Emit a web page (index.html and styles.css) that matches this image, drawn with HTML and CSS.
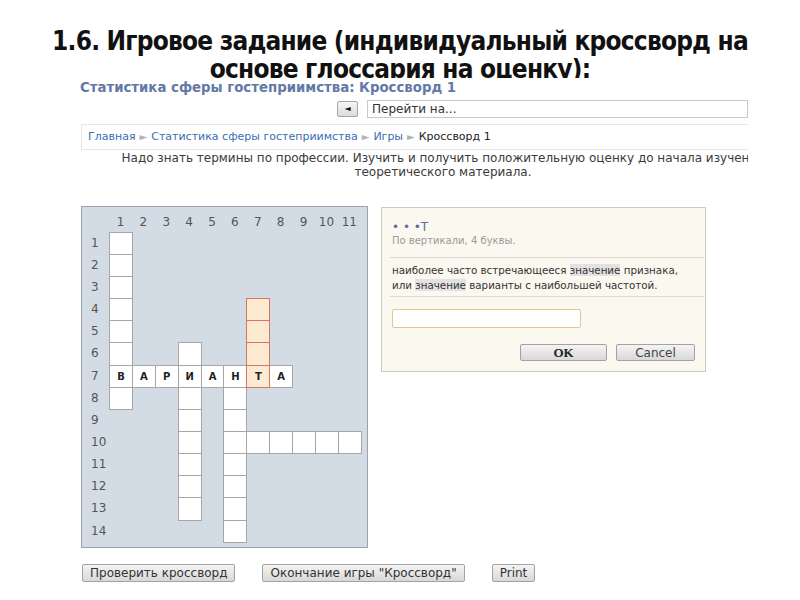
FILE: index.html
```html
<!DOCTYPE html>
<html lang="ru">
<head>
<meta charset="utf-8">
<title>Кроссворд</title>
<link rel="stylesheet" href="styles.css">
</head>
<body>
<div class="slide-title">
  <div class="t-line">1.6. Игровое задание (индивидуальный кроссворд на</div>
  <div class="t-line">основе глоссария на оценку):</div>
</div>
<div class="page">
  <h1 class="course">Статистика сферы гостеприимства: Кроссворд 1</h1>
  <div class="navrow">
    <span class="navbtn">&#9668;</span>
    <span class="jump">Перейти на...</span>
  </div>
  <div class="crumbs">
    <a class="lnk">Главная</a><span class="sep">&#9658;</span><a class="lnk">Статистика сферы гостеприимства</a><span class="sep">&#9658;</span><a class="lnk">Игры</a><span class="sep">&#9658;</span><span class="cur">Кроссворд 1</span>
  </div>
  <div class="desc">Надо знать термины по профессии. Изучить и получить положительную оценку до начала изучения теоретического материала.</div>
  <div class="game">
    <div class="cw">
      <span class="cn" style="grid-area:1/2">1</span>
      <span class="cn" style="grid-area:1/3">2</span>
      <span class="cn" style="grid-area:1/4">3</span>
      <span class="cn" style="grid-area:1/5">4</span>
      <span class="cn" style="grid-area:1/6">5</span>
      <span class="cn" style="grid-area:1/7">6</span>
      <span class="cn" style="grid-area:1/8">7</span>
      <span class="cn" style="grid-area:1/9">8</span>
      <span class="cn" style="grid-area:1/10">9</span>
      <span class="cn" style="grid-area:1/11">10</span>
      <span class="cn" style="grid-area:1/12">11</span>
      <span class="rn" style="grid-area:2/1">1</span>
      <span class="rn" style="grid-area:3/1">2</span>
      <span class="rn" style="grid-area:4/1">3</span>
      <span class="rn" style="grid-area:5/1">4</span>
      <span class="rn" style="grid-area:6/1">5</span>
      <span class="rn" style="grid-area:7/1">6</span>
      <span class="rn" style="grid-area:8/1">7</span>
      <span class="rn" style="grid-area:9/1">8</span>
      <span class="rn" style="grid-area:10/1">9</span>
      <span class="rn" style="grid-area:11/1">10</span>
      <span class="rn" style="grid-area:12/1">11</span>
      <span class="rn" style="grid-area:13/1">12</span>
      <span class="rn" style="grid-area:14/1">13</span>
      <span class="rn" style="grid-area:15/1">14</span>

      <span class="c" style="grid-area:2/2"></span>
      <span class="c" style="grid-area:3/2"></span>
      <span class="c" style="grid-area:4/2"></span>
      <span class="c" style="grid-area:5/2"></span>
      <span class="c" style="grid-area:6/2"></span>
      <span class="c" style="grid-area:7/2"></span>
      <span class="c" style="grid-area:9/2"></span>

      <span class="c" style="grid-area:7/5"></span>
      <span class="c" style="grid-area:9/5"></span>
      <span class="c" style="grid-area:10/5"></span>
      <span class="c" style="grid-area:11/5"></span>
      <span class="c" style="grid-area:12/5"></span>
      <span class="c" style="grid-area:13/5"></span>
      <span class="c" style="grid-area:14/5"></span>

      <span class="c" style="grid-area:9/7"></span>
      <span class="c" style="grid-area:10/7"></span>
      <span class="c" style="grid-area:11/7"></span>
      <span class="c" style="grid-area:12/7"></span>
      <span class="c" style="grid-area:13/7"></span>
      <span class="c" style="grid-area:14/7"></span>
      <span class="c" style="grid-area:15/7"></span>

      <span class="c" style="grid-area:11/8"></span>
      <span class="c" style="grid-area:11/9"></span>
      <span class="c" style="grid-area:11/10"></span>
      <span class="c" style="grid-area:11/11"></span>
      <span class="c" style="grid-area:11/12"></span>

      <span class="c" style="grid-area:8/2">В</span>
      <span class="c" style="grid-area:8/3">А</span>
      <span class="c" style="grid-area:8/4">Р</span>
      <span class="c" style="grid-area:8/5">И</span>
      <span class="c" style="grid-area:8/6">А</span>
      <span class="c" style="grid-area:8/7">Н</span>
      <span class="c" style="grid-area:8/9">А</span>

      <span class="c hl" style="grid-area:5/8"></span>
      <span class="c hl" style="grid-area:6/8"></span>
      <span class="c hl" style="grid-area:7/8"></span>
      <span class="c hl" style="grid-area:8/8">Т</span>
    </div>
    <div class="dlg">
      <div class="dlg-word">&bull; &bull; &bull;T</div>
      <div class="dlg-dir">По вертикали, 4 буквы.</div>
      <div class="dlg-rule"></div>
      <div class="dlg-clue">наиболее часто встречающееся <span class="mark">значение</span> признака,<br>или <span class="mark">значение</span> варианты с наибольшей частотой.</div>
      <div class="dlg-rule dlg-rule2"></div>
      <div class="dlg-input"></div>
      <div class="dlg-btns">
        <span class="btn btn-ok">OK</span>
        <span class="btn btn-cancel">Cancel</span>
      </div>
    </div>
  </div>
  <div class="actions">
    <span class="btn act">Проверить кроссворд</span>
    <span class="btn act">Окончание игры "Кроссворд"</span>
    <span class="btn act">Print</span>
  </div>
</div>
</body>
</html>
```
FILE: styles.css
```css
html, body {
  margin: 0;
  padding: 0;
  background: #fff;
}
body {
  width: 800px;
  height: 600px;
  overflow: hidden;
  font-family: "DejaVu Sans", Verdana, sans-serif;
  color: #333;
}
.slide-title {
  height: 78px;
  overflow: hidden;
  box-sizing: border-box;
  padding-top: 27px;
  text-align: center;
  font-family: "DejaVu Sans Condensed", "DejaVu Sans", sans-serif;
  font-stretch: condensed;
  font-weight: bold;
  font-size: 26px;
  letter-spacing: -0.8px;
  line-height: 28px;
  color: #111;
}
.page {
  width: 668px;
  margin-left: 80px;
  overflow: hidden;
}
.course {
  margin: 2px 0 0 0;
  font-size: 13.3px;
  line-height: 16px;
  font-weight: bold;
  color: #6279a6;
}
.navrow {
  display: flex;
  align-items: center;
  margin-top: 4px;
  height: 18px;
  padding-left: 257px;
}
.navbtn {
  width: 23px;
  height: 16px;
  box-sizing: border-box;
  border: 1px solid #a5a5a5;
  border-radius: 2px;
  background: linear-gradient(#f6f6f6, #dcdcdc);
  font-size: 8px;
  line-height: 14px;
  text-align: center;
  color: #111;
}
.jump {
  margin-left: 9px;
  width: 420px;
  height: 18px;
  box-sizing: border-box;
  border: 1px solid #c8c8c8;
  padding-left: 4px;
  font-size: 12px;
  line-height: 16px;
  color: #333;
  white-space: nowrap;
}
.crumbs {
  margin-top: 6px;
  margin-left: 1px;
  width: 700px;
  height: 26px;
  box-sizing: border-box;
  border: 1px solid #e6e6e6;
  padding-left: 6px;
  font-size: 11px;
  line-height: 24px;
  white-space: nowrap;
}
.lnk {
  color: #3b6db4;
}
.sep {
  color: #b3b3b3;
  font-size: 10px;
  margin: 0 4px;
}
.cur {
  color: #222;
}
.desc {
  width: 726px;
  text-align: center;
  font-size: 12px;
  line-height: 14px;
  color: #3a3a3a;
  margin-top: 1px;
}
.game {
  display: flex;
  align-items: flex-start;
  gap: 13px;
  margin-top: 27px;
  margin-left: 1px;
}
.cw {
  width: 287px;
  height: 342px;
  box-sizing: border-box;
  border: 1px solid #9aa3ab;
  background: #d3dce4;
  display: grid;
  grid-template-columns: 27px repeat(11, 22.9px);
  grid-template-rows: 24.7px repeat(14, 22.15px);
}
.cn {
  display: flex;
  align-items: flex-end;
  justify-content: center;
  padding-bottom: 3px;
  font-size: 12px;
  color: #555;
}
.rn {
  display: flex;
  align-items: center;
  padding-left: 9px;
  font-size: 12px;
  color: #555;
}
.c {
  width: calc(100% + 1px);
  height: calc(100% + 1px);
  box-sizing: border-box;
  background: #fff;
  border: 1px solid #a6a6a6;
  display: flex;
  align-items: center;
  justify-content: center;
  font-size: 10px;
  font-weight: bold;
  color: #222;
}
.hl {
  background: #fdead2;
  border-color: #d9735f;
  position: relative;
  z-index: 1;
}
.dlg {
  width: 325px;
  height: 165px;
  margin-top: 1px;
  box-sizing: border-box;
  border: 1px solid #cfcac0;
  background: #fbf8ef;
  padding: 11px 10px 0 10px;
  display: flex;
  flex-direction: column;
}
.dlg-word {
  font-size: 12px;
  line-height: 16px;
  color: #5d6f97;
}
.dlg-dir {
  font-size: 10px;
  line-height: 12px;
  color: #9a9a9a;
}
.dlg-rule {
  height: 1px;
  background: #dcd8cf;
  margin: 10px -9px 0 -2px;
}
.dlg-rule2 {
  margin-top: 3px;
}
.dlg-clue {
  margin-top: 5px;
  font-size: 10.3px;
  line-height: 15px;
  color: #333;
  white-space: nowrap;
}
.mark {
  background: #e2e2e2;
}
.dlg-input {
  margin-top: 12px;
  width: 189px;
  height: 19px;
  box-sizing: border-box;
  border: 1px solid #e3c68f;
  border-radius: 2px;
  background: #fff;
}
.dlg-btns {
  display: flex;
  justify-content: flex-end;
  gap: 9px;
  margin-top: 16px;
}
.btn {
  display: inline-flex;
  align-items: center;
  justify-content: center;
  box-sizing: border-box;
  height: 18px;
  border: 1px solid #a2a2a2;
  border-radius: 2px;
  background: linear-gradient(#f4f4f4, #d8d8d8);
  white-space: nowrap;
}
.btn-ok {
  width: 87px;
  height: 17px;
  font-family: "Liberation Serif", "Times New Roman", serif;
  font-weight: bold;
  font-size: 13px;
  color: #222;
}
.btn-cancel {
  width: 79px;
  height: 17px;
  font-size: 12px;
  color: #444;
}
.actions {
  display: flex;
  gap: 27px;
  margin-top: 16px;
  margin-left: 2px;
}
.act {
  padding: 0 7px;
  font-size: 12px;
  color: #333;
}
```
